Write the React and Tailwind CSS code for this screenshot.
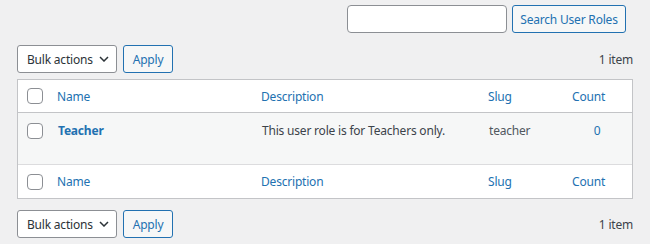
import React from "react";

function Checkbox() {
  return <span className="block w-[16px] h-[16px] rounded-[4px] border border-[#8c8f94] bg-white" />;
}

function Chevron() {
  return (
    <svg width="10" height="6" viewBox="0 0 10 6" className="ml-[6px]">
      <path d="M1 1l4 4 4-4" fill="none" stroke="#2c3338" strokeWidth="1.5" />
    </svg>
  );
}

function TableNav() {
  return (
    <div className="flex items-center justify-between h-[28px]">
      <div className="flex items-center gap-[6px] h-full">
        <div className="flex items-center w-[100px] h-full rounded-[3px] border border-[#8c8f94] bg-white pl-[9px] text-[#2c3338]">
          <span>Bulk actions</span>
          <Chevron />
        </div>
        <div className="flex items-center justify-center w-[50px] h-full rounded-[3px] border border-[#2271b1] bg-[#f6f7f7] text-[#2271b1]">
          Apply
        </div>
      </div>
      <span className="text-[#3c434a]">1 item</span>
    </div>
  );
}

function HeadRow({ border }) {
  return (
    <div className={"grid grid-cols-[29px_204px_227px_84px_70px] h-[33px] items-center text-[#2271b1] bg-white " + border}>
      <div className="pl-[9px]"><Checkbox /></div>
      <div className="pl-[10px]">Name</div>
      <div className="pl-[10px]">Description</div>
      <div className="pl-[10px]">Slug</div>
      <div className="pl-[10px]">Count</div>
    </div>
  );
}

export default function App() {
  return (
    <div className="w-[650px] h-[244px] bg-[#f0f0f1] px-[17px] font-['Noto_Sans',sans-serif] text-[12px] tracking-[-0.2px] leading-[19px] overflow-hidden">
      <div className="flex justify-end gap-[5px] pt-[5px] pr-[7px]">
        <div className="w-[160px] h-[28px] rounded-[4px] border border-[#8c8f94] bg-white" />
        <div className="flex items-center justify-center w-[114px] h-[28px] rounded-[3px] border border-[#2271b1] bg-[#f6f7f7] text-[#2271b1]">
          Search User Roles
        </div>
      </div>
      <div className="mt-[12px]">
        <TableNav />
      </div>
      <div className="mt-[6px] border border-[#c3c4c7] bg-white">
        <HeadRow border="border-b border-[#c3c4c7]" />
        <div className="grid grid-cols-[29px_204px_227px_84px_70px] h-[52px] bg-[#f6f7f7] border-b border-[#dcdcde] pt-[8px]">
          <div className="pl-[9px] pt-[2px]"><Checkbox /></div>
          <div className="pl-[11px] font-bold text-[#2271b1]">Teacher</div>
          <div className="pl-[11px] text-[#3c434a]">This user role is for Teachers only.</div>
          <div className="pl-[11px] text-[#50575e]">teacher</div>
          <div className="text-center text-[#2271b1]">0</div>
        </div>
        <HeadRow border="" />
      </div>
      <div className="mt-[11px]">
        <TableNav />
      </div>
    </div>
  );
}
